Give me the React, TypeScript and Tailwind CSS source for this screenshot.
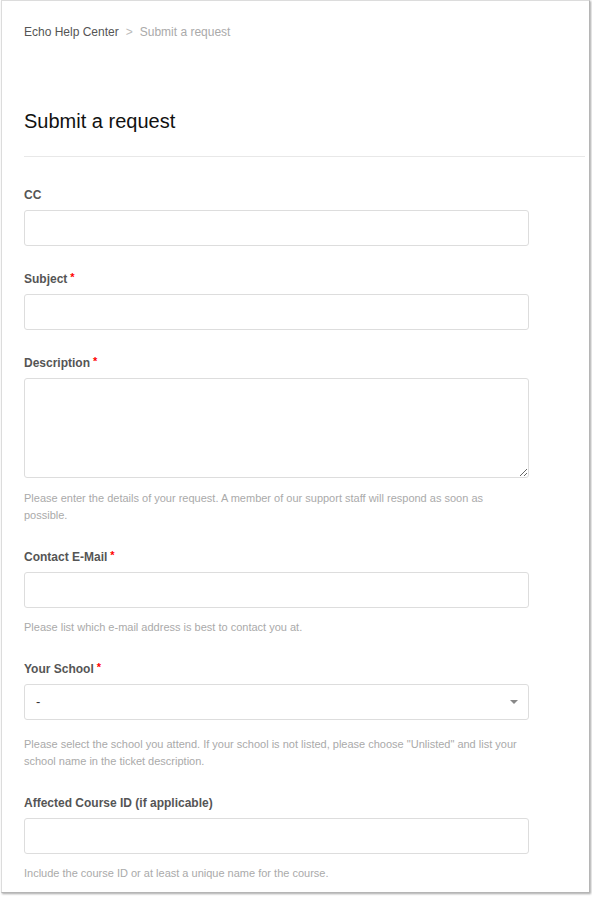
import React from "react"

interface FieldProps {
  label: string
  required?: boolean
  hint?: React.ReactNode
  hintGap?: string
  children: React.ReactNode
}

function Field({ label, required, hint, hintGap = "mt-[11px]", children }: FieldProps) {
  return (
    <div className="mb-6">
      <label className="mb-1.5 flex items-start text-[12px] font-bold leading-[18px] text-[#555]">
        {label}
        {required && <span className="ml-[3px] text-[11px] leading-[14px] text-[#f00]">*</span>}
      </label>
      {children}
      {hint && <p className={`${hintGap} w-[505px] text-[11px] leading-[17px] text-[#aaa]`}>{hint}</p>}
    </div>
  )
}

const inputClass =
  "block h-9 w-[505px] rounded-[3px] border border-[#ddd] bg-white px-3 text-[13px] text-[#555] outline-none"

export default function App() {
  return (
    <div className="h-[897px] w-[592px] overflow-hidden bg-white" style={{ fontFamily: '"Liberation Sans", Arial, sans-serif' }}>
      <div className="ml-px h-[893px] w-[589px] overflow-hidden border border-[#dcdcdc] border-r-[#b5b5b5] border-b-[#b5b5b5] bg-white shadow-[1px_1px_2px_rgba(0,0,0,0.35)]">
        <div className="pl-[22px] pr-[4px]">
          {/* breadcrumbs */}
          <nav className="flex items-center pt-[22px] text-[12px] leading-[18px]">
            <span className="text-[#555]">Echo Help Center</span>
            <span className="mx-[7px] text-[#bbb]">&gt;</span>
            <span className="text-[#aaa]">Submit a request</span>
          </nav>

          <h1 className="mt-[67px] text-[20px] leading-[26px] text-[#111]">Submit a request</h1>
          <div className="mt-[22px] h-px w-[561px] bg-[#e8e8e8]" />

          <form className="pt-[29px]">
            <Field label="CC">
              <input className={inputClass} />
            </Field>

            <Field label="Subject" required>
              <input className={inputClass} />
            </Field>

            <Field
              label="Description"
              required
              hintGap="mt-[12px]"
              hint="Please enter the details of your request. A member of our support staff will respond as soon as possible."
            >
              <textarea className="block h-[100px] w-[505px] resize-y rounded-[3px] border border-[#ddd] bg-white px-3 py-2 text-[13px] outline-none" />
            </Field>

            <Field label="Contact E-Mail" required hint="Please list which e-mail address is best to contact you at.">
              <input className={inputClass} />
            </Field>

            <Field
              label="Your School"
              required
              hintGap="mt-[16px]"
              hint={'Please select the school you attend. If your school is not listed, please choose "Unlisted" and list your school name in the ticket description.'}
            >
              <div className="relative flex h-9 w-[505px] items-center rounded-[3px] border border-[#ddd] bg-white pl-[11px] text-[13px] text-[#333]">
                -
                <span className="absolute right-[10px] top-[15px] h-0 w-0 border-x-[4px] border-t-[4px] border-x-transparent border-t-[#888]" />
              </div>
            </Field>

            <Field label="Affected Course ID (if applicable)" hint="Include the course ID or at least a unique name for the course.">
              <input className={inputClass} />
            </Field>
          </form>
        </div>
      </div>
    </div>
  )
}
